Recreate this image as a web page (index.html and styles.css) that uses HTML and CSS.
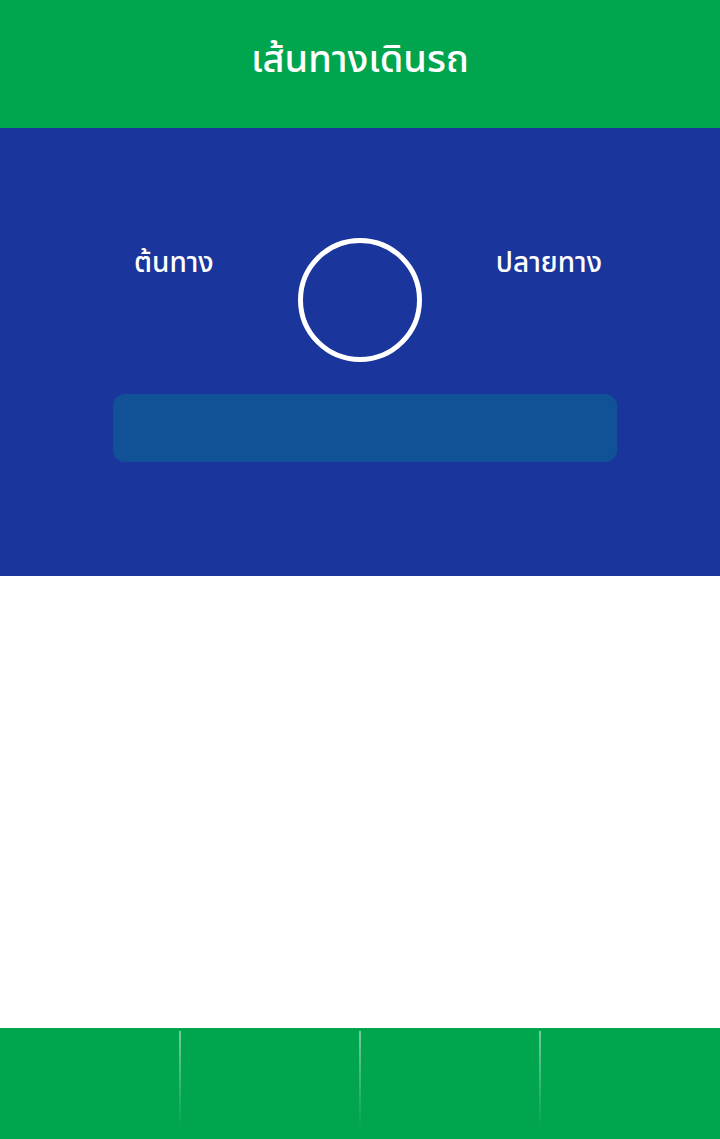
FILE: index.html
```html
<!DOCTYPE html>
<html lang="th">
<head>
<meta charset="utf-8">
<title>เส้นทางเดินรถ</title>
<link rel="stylesheet" href="styles.css">
</head>
<body>
<div class="app">
  <header class="topbar">
    <h1 class="title">เส้นทางเดินรถ</h1>
  </header>
  <section class="route">
    <div class="ends">
      <div class="label label-from">ต้นทาง</div>
      <div class="swap"></div>
      <div class="label label-to">ปลายทาง</div>
    </div>
    <div class="search"></div>
  </section>
  <main class="content"></main>
  <nav class="tabbar">
    <div class="tab"></div>
    <div class="tab"></div>
    <div class="tab"></div>
    <div class="tab"></div>
  </nav>
</div>
</body>
</html>
```
FILE: styles.css
```css
html, body {
  margin: 0;
  padding: 0;
  height: 100%;
}
body {
  font-family: "Noto Sans Thai", "Noto Sans", "Liberation Sans", sans-serif;
  background: #ffffff;
}
.app {
  display: flex;
  flex-direction: column;
  height: 1139px;
  width: 720px;
}
.topbar {
  height: 128px;
  background: #00a54e;
  display: flex;
  align-items: center;
  justify-content: center;
}
.title {
  margin: 0;
  color: #ffffff;
  font-size: 38px;
  font-weight: 500;
  line-height: 1;
  padding-bottom: 6px;
}
.route {
  height: 448px;
  background: #1a359b;
  display: flex;
  flex-direction: column;
  padding: 110px 0 0 113px;
  box-sizing: border-box;
}
.ends {
  width: 504px;
  display: grid;
  grid-template-columns: 185px 124px 195px;
  align-items: start;
}
.label {
  color: #ffffff;
  font-size: 28px;
  font-weight: 500;
  line-height: 1;
  padding-top: 12px;
}
.label-from {
  padding-left: 21px;
}
.label-to {
  text-align: right;
  padding-right: 15px;
}
.swap {
  width: 114px;
  height: 114px;
  border: 5px solid #ffffff;
  border-radius: 50%;
}
.search {
  margin-top: 32px;
  width: 504px;
  height: 68px;
  border-radius: 12px;
  background: #115297;
}
.content {
  flex: 1;
  background: #ffffff;
}
.tabbar {
  height: 111px;
  background: #00a54e;
  display: flex;
}
.tab {
  flex: 1;
  position: relative;
}
.tab + .tab::before {
  content: "";
  position: absolute;
  left: -1px;
  top: 3px;
  width: 2px;
  height: 98px;
  background: linear-gradient(to bottom, rgba(255,255,255,0.45), rgba(255,255,255,0));
}
```
